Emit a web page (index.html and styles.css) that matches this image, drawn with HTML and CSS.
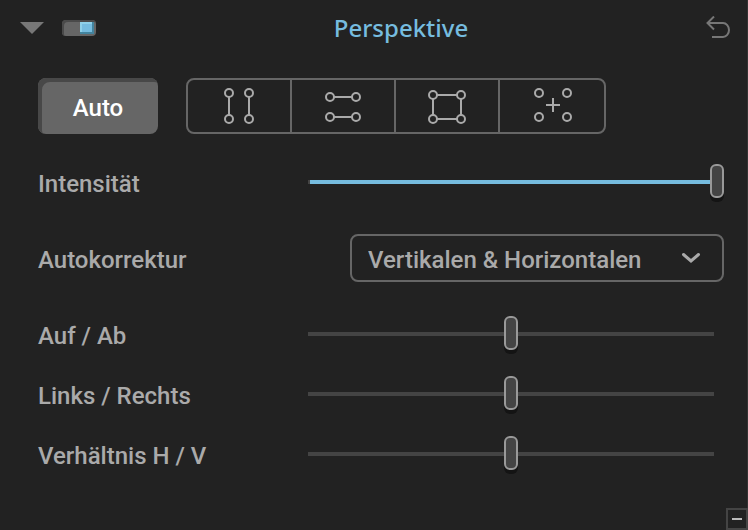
FILE: index.html
```html
<!DOCTYPE html>
<html lang="de">
<head>
  <meta charset="UTF-8">
  <meta name="viewport" content="width=device-width, initial-scale=1">
  <title>Perspektive</title>
  <link rel="stylesheet" href="styles.css">
</head>
<body>

  <section class="panel">
    <header class="panel-header">
      <button class="icon-btn" aria-label="Einklappen">
        <svg width="24" height="12" viewBox="0 0 24 12"><path d="M0 0h24L12 12z" fill="#777"/></svg>
      </button>
      <input type="checkbox" class="toggle" aria-label="Perspektive aktivieren" checked>
      <h1>Perspektive</h1>
      <button class="icon-btn" aria-label="Zurücksetzen">
        <svg width="24" height="24" viewBox="0 0 24 24" fill="none" stroke="#777" stroke-width="2">
          <path d="M8 0.500L1.500 7L8 13.500M1.500 7H17a6 7 0 0 1 0 14H6"/>
        </svg>
      </button>
    </header>

    <div class="toolbar">
      <button class="btn-auto">Auto</button>
      <div class="btn-group">
        <button aria-label="Vertikalen">
          <svg width="40" height="40" viewBox="0 0 40 40">
            <circle cx="10" cy="7" r="4"/><circle cx="30" cy="7" r="4"/>
            <circle cx="10" cy="33" r="4"/><circle cx="30" cy="33" r="4"/>
            <path d="M10 11v18M30 11v18"/>
          </svg>
        </button>
        <button aria-label="Horizontalen">
          <svg width="40" height="40" viewBox="0 0 40 40">
            <circle cx="7" cy="11" r="4"/><circle cx="33" cy="11" r="4"/>
            <circle cx="7" cy="31" r="4"/><circle cx="33" cy="31" r="4"/>
            <path d="M11 11h18M11 31h18"/>
          </svg>
        </button>
        <button aria-label="Rechteck">
          <svg width="40" height="40" viewBox="0 0 40 40">
            <circle cx="6" cy="9" r="4"/><circle cx="34" cy="9" r="4"/>
            <circle cx="6" cy="33" r="4"/><circle cx="34" cy="33" r="4"/>
            <path d="M10 9h20M10 33h20M6 13v16M34 13v16"/>
          </svg>
        </button>
        <button aria-label="8 Punkte">
          <svg width="40" height="40" viewBox="0 0 40 40">
            <circle cx="7" cy="7" r="4"/><circle cx="35" cy="7" r="4"/>
            <circle cx="7" cy="31" r="4"/><circle cx="35" cy="31" r="4"/>
            <path d="M14 19h14M21 12v14"/>
          </svg>
        </button>
      </div>
    </div>

    <div class="row">
      <label for="intensity">Intensität</label>
      <input type="range" id="intensity" class="filled" min="0" max="100" value="100">
    </div>
    <div class="row row-select">
      <label for="autocorrect">Autokorrektur</label>
      <div class="select-wrap">
        <select id="autocorrect">
          <option>Vertikalen &amp; Horizontalen</option>
          <option>Vertikalen</option>
          <option>Horizontalen</option>
        </select>
        <svg class="chevron" width="20" height="12" viewBox="0 0 20 12">
          <path d="M2.500 2.500l7.500 6.500 7.500-6.500" fill="none" stroke="#aaa" stroke-width="3" stroke-linecap="round"/>
        </svg>
      </div>
    </div>
    <div class="row">
      <label for="updown">Auf / Ab</label>
      <input type="range" id="updown" min="-100" max="100" value="0">
    </div>
    <div class="row">
      <label for="leftright">Links / Rechts</label>
      <input type="range" id="leftright" min="-100" max="100" value="0">
    </div>
    <div class="row">
      <label for="ratio">Verhältnis H / V</label>
      <input type="range" id="ratio" min="-100" max="100" value="0">
    </div>

    <footer class="panel-footer">
      <button class="btn-minus" aria-label="Palette verkleinern"></button>
    </footer>
  </section>

</body>
</html>
```
FILE: styles.css
```css
* {
  box-sizing: border-box;
}
body {
  margin: 0;
  background-color: #222;
  color: #aaa;
  font-family: Roboto, sans-serif;
  font-size: 24px;
  font-weight: 500;
}
button, select {
  font: inherit;
  color: inherit;
  background: none;
  border: none;
  padding: 0;
  cursor: pointer;
}
svg {
  display: block;
}
.panel {
  display: flex;
  flex-direction: column;
  min-height: 100vh;
  background: linear-gradient(#333, #333) right / 1px 100% no-repeat;
}

/* header */
.panel-header {
  display: flex;
  align-items: center;
  height: 56px;
  padding: 0 18px 0 20px;
}
.panel-header h1 {
  flex: 1;
  margin: 0;
  padding-bottom: 2px;
  text-align: center;
  font-family: "Noto Sans", sans-serif;
  font-size: 24px;
  font-weight: 500;
  color: #76bcdf;
}
.toggle {
  appearance: none;
  width: 34px;
  height: 16px;
  margin: 0 0 0 18px;
  padding: 0 2px 0 0;
  border-radius: 4px;
  background: #666;
  box-shadow: inset 2px 2px 0 #4a4a4a;
  display: flex;
  align-items: center;
}
.toggle:checked {
  justify-content: flex-end;
}
.toggle::before {
  content: "";
  width: 14px;
  height: 12px;
  background: #76bcdf;
  box-shadow: inset -2px -2px 0 #43849e, inset 2px 2px 0 #8fd0e8;
}

/* tools */
.toolbar {
  display: flex;
  gap: 28px;
  margin: 22px 24px 18px 38px;
}
.btn-auto {
  width: 120px;
  height: 56px;
  padding-top: 4px;
  border-radius: 8px;
  background: #666;
  box-shadow: inset 4px 4px 0 #484848;
  color: #fff;
}
.btn-group {
  display: flex;
  border: 2px solid #666;
  border-radius: 8px;
}
.btn-group button {
  display: flex;
  align-items: center;
  justify-content: center;
  width: 104px;
  height: 52px;
  border-right: 2px solid #666;
}
.btn-group button:last-child {
  border-right: none;
}
.btn-group svg {
  fill: none;
  stroke: #aaa;
  stroke-width: 2;
}

/* rows */
.row {
  display: grid;
  grid-template-columns: 260px 1fr;
  align-items: center;
  height: 60px;
  padding: 0 24px 0 38px;
}
.row label {
  padding-top: 4px;
}
.row-select {
  height: 48px;
  margin: 22px 0;
}
input[type="range"] {
  appearance: none;
  width: 100%;
  height: 40px;
  margin: 0;
  padding-bottom: 2px;
  background: linear-gradient(#444, #444) center / calc(100% - 20px) 4px no-repeat;
}
input[type="range"].filled {
  background-image: linear-gradient(to right, #444 2px, #76bcdf 2px);
}
input[type="range"]::-webkit-slider-thumb {
  appearance: none;
  width: 14px;
  height: 34px;
  border: 2px solid #999;
  border-radius: 6px;
  background: #444;
  box-shadow: 0 4px 0 #141414;
}
.select-wrap {
  position: relative;
  margin-left: 52px;
}
select {
  appearance: none;
  display: block;
  width: 100%;
  height: 48px;
  padding: 4px 48px 0 16px;
  border: 2px solid #666;
  border-radius: 8px;
}
.chevron {
  position: absolute;
  right: 23px;
  top: 18px;
  pointer-events: none;
}

/* footer */
.panel-footer {
  display: flex;
  justify-content: flex-end;
  margin-top: auto;
}
.btn-minus {
  display: flex;
  align-items: center;
  justify-content: center;
  width: 22px;
  height: 22px;
  border: 2px solid #444;
}
.btn-minus::before {
  content: "";
  width: 10px;
  height: 2px;
  background: #bbb;
}
```
